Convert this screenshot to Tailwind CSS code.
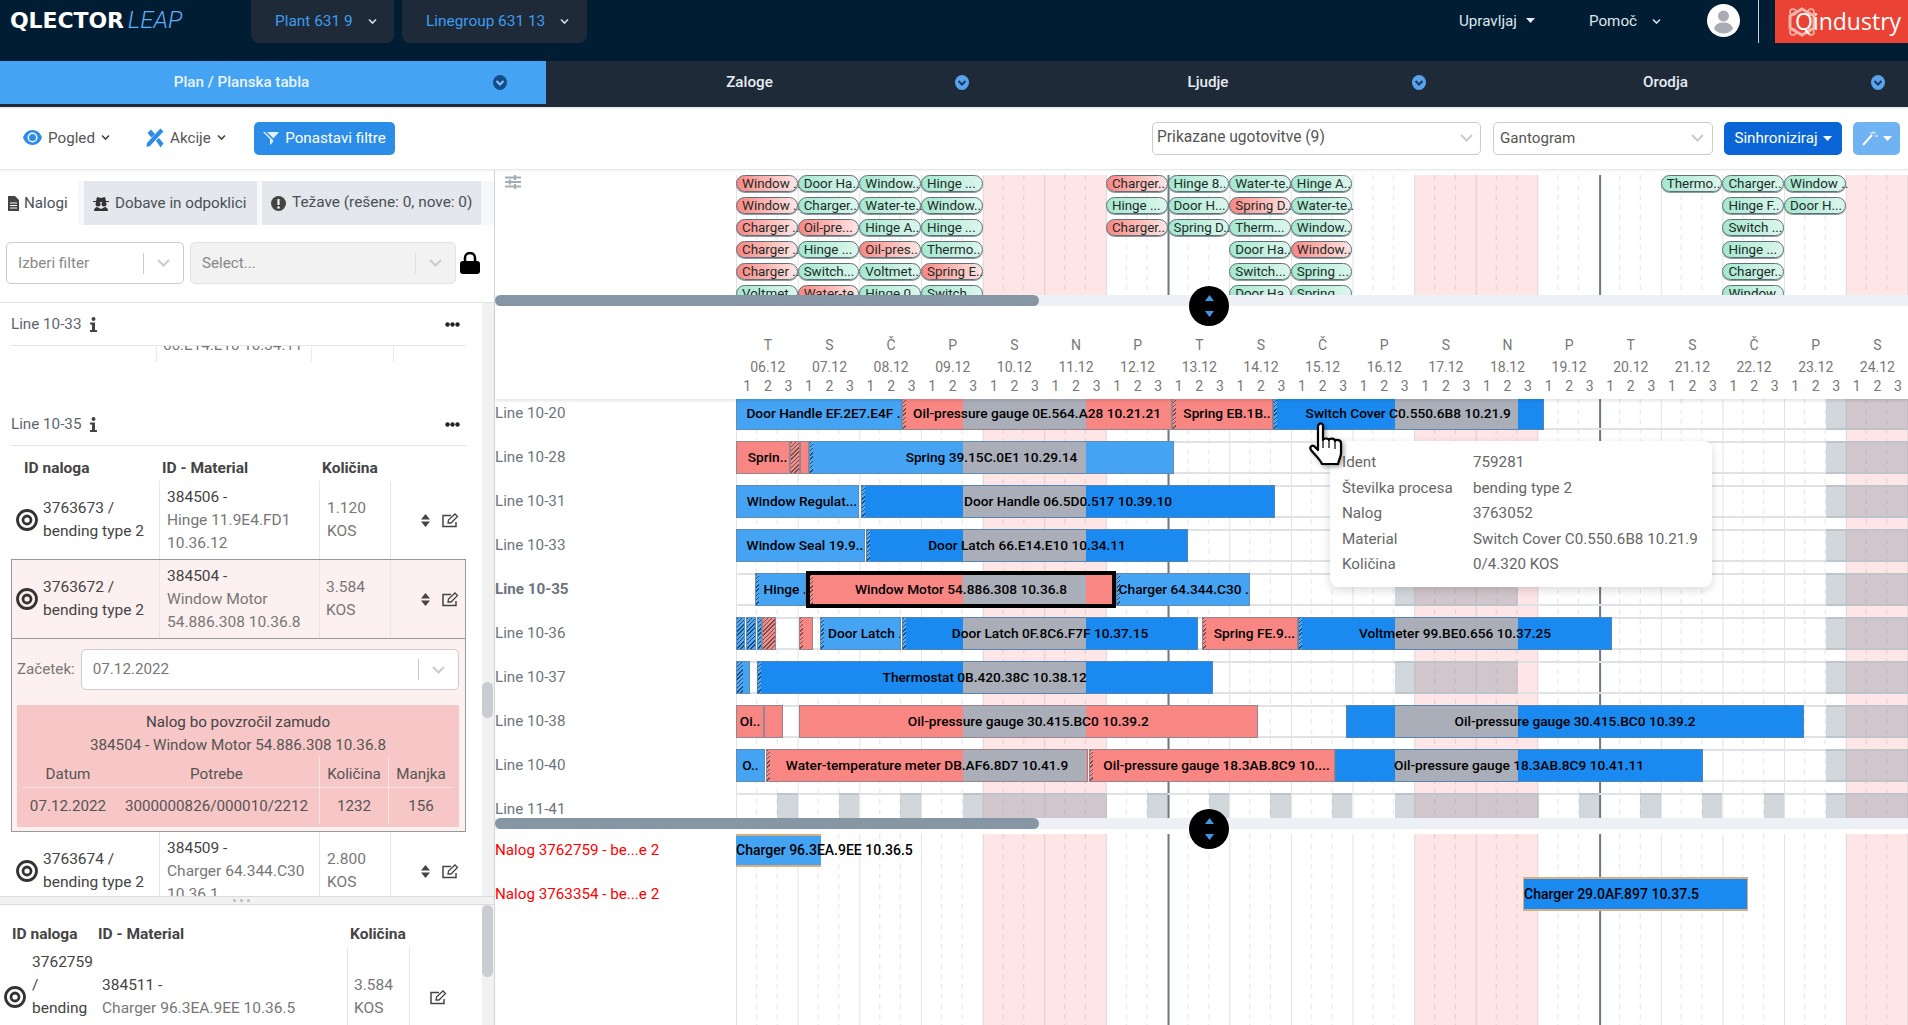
<!DOCTYPE html>
<html lang="sl"><head><meta charset="utf-8"><script src="https://cdn.jsdelivr.net/npm/@tailwindcss/browser@4"></script></head>
<body class="[font-family:Roboto,sans-serif] bg-white">
<div class="w-[1908px] h-[1025px] overflow-hidden flex flex-col text-[15.2px] text-[#495057]">
<!-- header -->
<header class="h-[61px] bg-[#011d33] flex items-start shrink-0">
  <div class="w-[251px] pl-[10px] pt-[6px] flex items-baseline">
    <span class="[font-family:'DejaVu_Sans'] font-bold text-white text-[22px] tracking-[-0.1px] leading-[28px]">QLECTOR</span>
    <span class="italic font-light text-[#5db0f5] text-[24px] ml-[4px] leading-[28px]">LEAP</span>
  </div>
  <div class="w-[143px] h-[43px] bg-[#1e2a38] rounded-b-lg flex items-center pl-[24px] text-[#3d9cf0] text-[15.4px]">Plant 631 9<svg class="ml-[15px]" width="9" height="7" viewBox="0 0 9 7"><path d="M1 1.5l3.5 3.5L8 1.5" fill="none" stroke="#d5dbe2" stroke-width="1.6"/></svg></div>
  <div class="w-[185px] h-[43px] ml-[8px] bg-[#1e2a38] rounded-b-lg flex items-center pl-[24px] text-[#3d9cf0] text-[15.4px]">Linegroup 631 13<svg class="ml-[15px]" width="9" height="7" viewBox="0 0 9 7"><path d="M1 1.5l3.5 3.5L8 1.5" fill="none" stroke="#d5dbe2" stroke-width="1.6"/></svg></div>
  <div class="ml-auto flex items-start h-[43px]">
    <div class="h-[43px] flex items-center text-[#dfe5ea]">Upravljaj<svg class="ml-[9px] mb-[3px]" width="9" height="5" viewBox="0 0 9 5"><path d="M0 0h9L4.500 5z" fill="#e8ecf0"/></svg></div>
    <div class="h-[43px] ml-[54px] flex items-center text-[#dfe5ea]">Pomoč<svg class="ml-[15px]" width="9" height="7" viewBox="0 0 9 7"><path d="M1 1.500l3.500 3.500L8 1.500" fill="none" stroke="#d5dbe2" stroke-width="1.600"/></svg></div>
    <svg class="ml-[46px] mt-[4px]" width="33" height="33" viewBox="0 0 33 33"><circle cx="16.500" cy="16.500" r="16.500" fill="#fff"/><circle cx="16.500" cy="12" r="5.500" fill="#a9adb3"/><path d="M7 25c1-5 5-6.500 9.500-6.500S25 20 26 25c-2.500 3-6 4.500-9.500 4.500S9.500 28 7 25z" fill="#a9adb3"/></svg>
    <div class="w-px h-[43px] ml-[18px] bg-[#c9d0d6]"></div>
    <div class="w-[133px] h-[43px] ml-[16px] bg-[#ea4335] flex items-center pl-[10px] text-white">
      <svg width="34" height="34" viewBox="0 0 34 34"><path d="M17 4l12 7v12l-12 7-12-7V11z" fill="none" stroke="#f6b5ac" stroke-width="3"/><circle cx="8" cy="7" r="3" fill="none" stroke="#f6b5ac" stroke-width="1.600"/><circle cx="8" cy="27" r="3" fill="none" stroke="#f6b5ac" stroke-width="1.600"/><circle cx="26" cy="7" r="3" fill="none" stroke="#f6b5ac" stroke-width="1.600"/><circle cx="26" cy="27" r="3" fill="none" stroke="#f6b5ac" stroke-width="1.600"/></svg>
      <span class="-ml-[24px] text-[23px] leading-none relative [font-family:'Open_Sans']">Qindustry</span>
    </div>
  </div>
</header>
<!-- tabs -->
<nav class="h-[46px] bg-[#1e2a38] flex items-start shrink-0 text-[#e8edf2] font-medium text-[15.2px]">
  <div class="w-[546px] h-[43px] bg-[#45a3f4] flex items-center"><span class="flex-1 text-center pr-[10px] text-[#e9f4fe]">Plan / Planska tabla</span><svg class="mr-[39px]" width="14" height="15" viewBox="0 0 14 15"><ellipse cx="7" cy="7.500" rx="7" ry="7.500" fill="#114d8c"/><path d="M3.500 6l3.500 3.500L10.500 6" fill="none" stroke="#8fc4f5" stroke-width="2"/></svg></div>
  <div class="w-[458px] h-[43px] flex items-center"><span class="flex-1 text-center pr-[2px]">Zaloge</span><svg class="mr-[35px]" width="14" height="15" viewBox="0 0 14 15"><ellipse cx="7" cy="7.500" rx="7" ry="7.500" fill="#5aa3ec"/><path d="M3.500 6l3.500 3.500L10.500 6" fill="none" stroke="#123a63" stroke-width="2"/></svg></div>
  <div class="w-[458px] h-[43px] flex items-center"><span class="flex-1 text-center">Ljudje</span><svg class="mr-[36px]" width="14" height="15" viewBox="0 0 14 15"><ellipse cx="7" cy="7.500" rx="7" ry="7.500" fill="#5aa3ec"/><path d="M3.500 6l3.500 3.500L10.500 6" fill="none" stroke="#123a63" stroke-width="2"/></svg></div>
  <div class="w-[446px] h-[43px] flex items-center"><span class="flex-1 text-center pr-[2px]">Orodja</span><svg class="mr-[23px]" width="14" height="15" viewBox="0 0 14 15"><ellipse cx="7" cy="7.500" rx="7" ry="7.500" fill="#5aa3ec"/><path d="M3.500 6l3.500 3.500L10.500 6" fill="none" stroke="#123a63" stroke-width="2"/></svg></div>
</nav>
<!-- toolbar -->
<div class="h-[63px] shrink-0 flex items-center border-b border-[#e6e8ea] shadow-[inset_0_3px_3px_-2px_rgba(0,0,0,.12),0_1px_2px_rgba(0,0,0,.05)] relative z-10 bg-white text-[#555]">
  <div class="w-[146px] pl-[23px] flex items-center">
  <svg width="19" height="15" viewBox="0 0 19 15"><path d="M9.500 0C5 0 1.500 3 0 7.500 1.500 12 5 15 9.500 15S17.500 12 19 7.500C17.500 3 14 0 9.500 0z" fill="#2b8de8"/><circle cx="9.500" cy="7.500" r="5" fill="#fff"/><circle cx="9.500" cy="7.500" r="3.500" fill="#2b8de8"/></svg>
  <span class="ml-[6px]">Pogled</span><svg class="ml-[6px]" width="9" height="7" viewBox="0 0 9 7"><path d="M1 1.500l3.500 3.500L8 1.500" fill="none" stroke="#444" stroke-width="1.600"/></svg></div>
  <div class="w-[108px] flex items-center">
  <svg width="18" height="20" viewBox="0 0 18 20"><path d="M1 15L12 3l2.500-2.500 3 3L15 6 4 18l-3.500 1z" fill="#2b8de8"/><path d="M1.500 5L5 1.500 9 6 5.500 9.500zM10 12.500L13 10l4.500 5.500-3 4z" fill="#2b8de8"/></svg>
  <span class="ml-[6px]">Akcije</span><svg class="ml-[6px]" width="9" height="7" viewBox="0 0 9 7"><path d="M1 1.500l3.500 3.500L8 1.500" fill="none" stroke="#444" stroke-width="1.600"/></svg></div>
  <button class="w-[141px] h-[33px] bg-[#2b8de8] rounded-[5px] flex items-center justify-center gap-[5px] text-white"><svg width="17" height="15" viewBox="0 0 17 15"><path d="M0 1h16L10 8v3l-3 3V8z" fill="#e3f0fc"/><path d="M2 0l14 14" stroke="#2b8de8" stroke-width="1.500"/></svg>Ponastavi filtre</button>
  <div class="ml-[757px] w-[329px] h-[33px] border border-[#ccc] rounded-[5px] flex items-center justify-between pl-[4px] pr-[7px] text-[15.6px]">Prikazane ugotovitve (9)<svg width="13" height="8" viewBox="0 0 13 8"><path d="M1 1l5.500 5.500L12 1" fill="none" stroke="#ccc" stroke-width="2"/></svg></div>
  <div class="ml-[12px] w-[220px] h-[33px] border border-[#ccc] rounded-[5px] flex items-center justify-between pl-[6px] pr-[8px]">Gantogram<svg width="13" height="8" viewBox="0 0 13 8"><path d="M1 1l5.500 5.500L12 1" fill="none" stroke="#ccc" stroke-width="2"/></svg></div>
  <button class="ml-[11px] w-[118px] h-[33px] bg-[#0a66d6] rounded-[5px] flex items-center justify-center gap-[5px] text-white">Sinhroniziraj<svg width="9" height="5" viewBox="0 0 9 5"><path d="M0 0h9L4.500 5z" fill="#fff"/></svg></button>
  <button class="ml-[11px] w-[47px] h-[33px] bg-[#6fb3f2] rounded-[5px] flex items-center justify-center gap-[4px]"><svg width="17" height="16" viewBox="0 0 17 16"><path d="M1 15L10 5" stroke="#fff" stroke-width="2"/><path d="M11 1v3M14 2l-2 2M16 6h-3M8 2l2 2" stroke="#fff" stroke-width="1"/></svg><svg width="9" height="5" viewBox="0 0 9 5"><path d="M0 0h9L4.500 5z" fill="#fff"/></svg></button>
</div>
<!-- main -->
<div class="flex-1 flex min-h-0">
  <aside class="w-[495px] shrink-0 border-r border-[#d2d5d8] flex flex-col bg-white">
    <div class="mt-[11px] h-[44px] bg-[#f7f8f9] flex shrink-0 text-[#495057]">
      <div class="w-[78px] bg-white flex items-center pl-[8px] gap-[5px]"><svg width="11" height="15" viewBox="0 0 11 15"><path d="M0 0h7l4 4v11H0z" fill="#444"/><path d="M2 7h7M2 9.500h7M2 12h7" stroke="#fff"/></svg>Nalogi</div>
      <div class="ml-[6px] w-[173px] bg-[#e4e7eb] flex items-center pl-[9px] gap-[6px]"><svg width="16" height="15" viewBox="0 0 16 15"><path d="M3 5l1-4 4 1 4-1 1 4h3v1H0V5z" fill="#333"/><circle cx="5" cy="8" r="2.500" fill="#333"/><circle cx="11" cy="8" r="2.500" fill="#333"/><path d="M1 15c0-3 2-4 3-4l4 2 4-2c1 0 3 1 3 4z" fill="#333"/></svg>Dobave in odpoklici</div>
      <div class="ml-[5px] w-[219px] bg-[#e4e7eb] flex items-center pl-[9px] gap-[6px]"><svg width="15" height="15" viewBox="0 0 15 15"><circle cx="7.500" cy="7.500" r="7.500" fill="#444"/><path d="M7.500 3v6" stroke="#fff" stroke-width="2"/><circle cx="7.500" cy="11.500" r="1.200" fill="#fff"/></svg><span class="text-[15.4px]">Težave (rešene: 0, nove: 0)</span></div>
    </div>
    <div class="h-[78px] shrink-0 border-b border-[#e0e2e5] flex pt-[17px] pl-[6px]">
      <div class="w-[178px] h-[42px] border border-[#ccc] rounded-[5px] flex items-center pl-[11px] text-[#888]">Izberi filter<span class="ml-auto w-px h-[21px] bg-[#ccc]"></span><svg class="mx-[13px]" width="13" height="8" viewBox="0 0 13 8"><path d="M1 1l5.500 5.500L12 1" fill="none" stroke="#ccc" stroke-width="2"/></svg></div>
      <div class="ml-[6px] w-[266px] h-[42px] border border-[#e2e2e2] bg-[#f2f2f2] rounded-[5px] flex items-center pl-[11px] text-[#888]">Select...<span class="ml-auto w-px h-[21px] bg-[#e0e0e0]"></span><svg class="mx-[13px]" width="13" height="8" viewBox="0 0 13 8"><path d="M1 1l5.500 5.500L12 1" fill="none" stroke="#ccc" stroke-width="2"/></svg></div>
      <svg class="ml-[4px] mt-[10px]" width="20" height="22" viewBox="0 0 20 22"><path d="M5 10V6a5 5 0 0 1 10 0v4" fill="none" stroke="#000" stroke-width="2.500"/><rect y="9" width="20" height="13" rx="3" fill="#000"/></svg>
    </div>
    <div class="h-[593px] shrink-0 flex relative overflow-hidden">
      <div class="w-[482px] shrink-0 pl-[11px] overflow-hidden">
        <div class="w-[455px]">
          <div class="h-[43px] border-b border-[#e4e6e8] flex items-center text-[#5c6670]">Line 10-33<svg class="ml-[9px]" width="7" height="15" viewBox="0 0 7 15"><circle cx="3.500" cy="2" r="2" fill="#444"/><path d="M0 5.500h5V13h2v2H0v-2h2V7.500H0z" fill="#444"/></svg><svg class="ml-auto mr-[6px]" width="15" height="5" viewBox="0 0 15 5"><circle cx="2.500" cy="2.500" r="2.200" fill="#222"/><circle cx="7.500" cy="2.500" r="2.200" fill="#222"/><circle cx="12.500" cy="2.500" r="2.200" fill="#222"/></svg></div>
          <div class="h-[16px] overflow-hidden grid grid-cols-[146px_155px_82px_72px]"><div class="border-r border-[#e8eaec]"></div><div class="border-r border-[#e8eaec] pl-[6px] -mt-[12px] leading-[23px] text-[#777]">66.E14.E10 10.34.11</div><div class="border-r border-[#e8eaec]"></div><div></div></div>
          <div class="h-[41px]"></div>
          <div class="h-[43px] border-b border-[#e4e6e8] flex items-center text-[#5c6670]">Line 10-35<svg class="ml-[9px]" width="7" height="15" viewBox="0 0 7 15"><circle cx="3.500" cy="2" r="2" fill="#444"/><path d="M0 5.500h5V13h2v2H0v-2h2V7.500H0z" fill="#444"/></svg><svg class="ml-auto mr-[6px]" width="15" height="5" viewBox="0 0 15 5"><circle cx="2.500" cy="2.500" r="2.200" fill="#222"/><circle cx="7.500" cy="2.500" r="2.200" fill="#222"/><circle cx="12.500" cy="2.500" r="2.200" fill="#222"/></svg></div>
          <div class="h-[35px] grid grid-cols-[149px_160px_71px_75px] font-bold text-[#444] text-[15.5px] items-end pb-[1px]"><span class="pl-[13px]">ID naloga</span><span class="pl-[2px]">ID - Material</span><span class="pl-[2px]">Količina</span></div>
          <div class="h-[78px] grid grid-cols-[149px_160px_71px_75px] leading-[23px] text-[15.5px]">
            <div class="border-r border-[#e4e6e8] flex items-center pl-[5px] gap-[5px]"><svg width="22" height="22" viewBox="0 0 22 22"><circle cx="11" cy="11" r="9.500" fill="none" stroke="#333" stroke-width="2.800"/><circle cx="11" cy="11" r="4" fill="none" stroke="#333" stroke-width="2.800"/></svg><div class="text-[#444]">3763673 /<br>bending type 2</div></div>
            <div class="border-r border-[#e4e6e8] flex flex-col justify-center pl-[7px] text-[#777]"><span class="text-[#444]">384506 -</span><span>Hinge 11.9E4.FD1</span><span>10.36.12</span></div>
            <div class="border-r border-[#e4e6e8] flex items-center pl-[7px] text-[#777]"><span>1.120<br>KOS</span></div>
            <div class="flex items-center justify-end pr-[7px] gap-[12px]"><svg width="9" height="13" viewBox="0 0 9 13"><path d="M4.500 0L9 5.500H0zM4.500 13L0 7.500h9z" fill="#444"/></svg><svg width="17" height="15" viewBox="0 0 17 15"><path d="M14 9v4.500H1V2.500h8" fill="none" stroke="#444" stroke-width="1.500"/><path d="M6 10l.5-3L13 1l2.500 2.500L9 10z" fill="none" stroke="#444" stroke-width="1.300"/></svg></div>
          </div>
          <div class="border border-[#999] bg-[#fdf0f0]">
            <div class="h-[79px] grid grid-cols-[148px_160px_71px_74px] leading-[23px] border-b border-[#999] text-[15.5px]">
              <div class="border-r border-[#e4e6e8] flex items-center pl-[4px] gap-[5px]"><svg width="22" height="22" viewBox="0 0 22 22"><circle cx="11" cy="11" r="9.500" fill="none" stroke="#333" stroke-width="2.800"/><circle cx="11" cy="11" r="4" fill="none" stroke="#333" stroke-width="2.800"/></svg><div class="text-[#444]">3763672 /<br>bending type 2</div></div>
              <div class="border-r border-[#e4e6e8] flex flex-col justify-center pl-[7px] text-[#777]"><span class="text-[#444]">384504 -</span><span>Window Motor</span><span>54.886.308 10.36.8</span></div>
              <div class="border-r border-[#e4e6e8] flex items-center pl-[6px] text-[#777]"><span>3.584<br>KOS</span></div>
              <div class="flex items-center justify-end pr-[6px] gap-[12px]"><svg width="9" height="13" viewBox="0 0 9 13"><path d="M4.500 0L9 5.500H0zM4.500 13L0 7.500h9z" fill="#444"/></svg><svg width="17" height="15" viewBox="0 0 17 15"><path d="M14 9v4.500H1V2.500h8" fill="none" stroke="#444" stroke-width="1.500"/><path d="M6 10l.5-3L13 1l2.500 2.500L9 10z" fill="none" stroke="#444" stroke-width="1.300"/></svg></div>
            </div>
            <div class="pl-[5px] pr-[6px] pt-[10px] pb-[4px]">
              <div class="flex items-center h-[41px] text-[#777]">Začetek:<div class="ml-[6px] flex-1 h-[41px] bg-white border border-[#ccc] rounded-[5px] flex items-center pl-[11px]">07.12.2022<span class="ml-auto w-px h-[21px] bg-[#ccc]"></span><svg class="mx-[13px]" width="13" height="8" viewBox="0 0 13 8"><path d="M1 1l5.500 5.500L12 1" fill="none" stroke="#ccc" stroke-width="2"/></svg></div></div>
              <div class="mt-[15px] h-[122px] bg-[#f7c6c6] text-center leading-[23px] px-[6px] pt-[6px] text-[#555]">
                <div class="text-[#444]">Nalog bo povzročil zamudo</div><div>384504 - Window Motor 54.886.308 10.36.8</div>
                <div class="grid grid-cols-[297px_69px_64px] border-b border-[#f9e5e5] h-[32px] -mt-[1px]"><span class="leading-[36px] border-r border-[#f9e5e5] grid grid-cols-[90px_207px]"><span>Datum</span><span>Potrebe</span></span><span class="leading-[36px] border-r border-[#f9e5e5]">Količina</span><span class="leading-[36px]">Manjka</span></div>
                <div class="grid grid-cols-[297px_69px_64px] h-[32px] leading-[36px]"><span class="border-r border-[#f9e5e5] grid grid-cols-[90px_207px]"><span>07.12.2022</span><span>3000000826/000010/2212</span></span><span class="border-r border-[#f9e5e5]">1232</span><span>156</span></div>
              </div>
            </div>
          </div>
          <div class="h-[78px] grid grid-cols-[149px_160px_71px_75px] leading-[23px] text-[15.5px]">
            <div class="border-r border-[#e4e6e8] flex items-center pl-[5px] gap-[5px]"><svg width="22" height="22" viewBox="0 0 22 22"><circle cx="11" cy="11" r="9.500" fill="none" stroke="#333" stroke-width="2.800"/><circle cx="11" cy="11" r="4" fill="none" stroke="#333" stroke-width="2.800"/></svg><div class="text-[#444]">3763674 /<br>bending type 2</div></div>
            <div class="border-r border-[#e4e6e8] flex flex-col justify-center pl-[7px] text-[#777]"><span class="text-[#444]">384509 -</span><span>Charger 64.344.C30</span><span>10.36.1</span></div>
            <div class="border-r border-[#e4e6e8] flex items-center pl-[7px] text-[#777]"><span>2.800<br>KOS</span></div>
            <div class="flex items-center justify-end pr-[7px] gap-[12px]"><svg width="9" height="13" viewBox="0 0 9 13"><path d="M4.500 0L9 5.500H0zM4.500 13L0 7.500h9z" fill="#444"/></svg><svg width="17" height="15" viewBox="0 0 17 15"><path d="M14 9v4.500H1V2.500h8" fill="none" stroke="#444" stroke-width="1.500"/><path d="M6 10l.5-3L13 1l2.500 2.500L9 10z" fill="none" stroke="#444" stroke-width="1.300"/></svg></div>
          </div>
        </div>
      </div>
      <div class="w-[12px] bg-[#f1f1f1] relative"><div class="absolute left-0 right-px top-[379px] h-[36px] rounded-full bg-[#c9cdd2]"></div></div>
    </div>
    <div class="h-[9px] shrink-0 bg-[#f1f1f1] border-y border-[#dcdcdc] flex items-center justify-center gap-[4px] pr-[12px]"><i class="w-[3px] h-[3px] rounded-full bg-[#bbb]"></i><i class="w-[3px] h-[3px] rounded-full bg-[#bbb]"></i><i class="w-[3px] h-[3px] rounded-full bg-[#bbb]"></i></div>
    <div class="flex-1 flex min-h-0">
      <div class="w-[482px] shrink-0 overflow-hidden text-[15.5px]">
        <div class="h-[42px] grid grid-cols-[98px_252px_auto] font-bold text-[#444] items-end pb-[1px]"><span class="pl-[12px]">ID naloga</span><span>ID - Material</span><span>Količina</span></div>
        <div class="grid grid-cols-[98px_250px_62px_72px] h-[90px] leading-[23px]">
          <div class="flex items-start pl-[4px] gap-[6px]"><svg class="mt-[39px] shrink-0" width="22" height="22" viewBox="0 0 22 22"><circle cx="11" cy="11" r="9.500" fill="none" stroke="#333" stroke-width="2.800"/><circle cx="11" cy="11" r="4" fill="none" stroke="#333" stroke-width="2.800"/></svg><div class="text-[#444] pt-[4px]">3762759<br>/<br>bending</div></div>
          <div class="border-r border-[#e4e6e8] pl-[4px] pt-[27px] text-[#777]"><span class="text-[#444]">384511 -</span><br>Charger 96.3EA.9EE 10.36.5</div>
          <div class="border-r border-[#e4e6e8] pl-[6px] pt-[27px] text-[#777]">3.584<br>KOS</div>
          <div class="flex justify-start pl-[20px] pt-[43px]"><svg width="17" height="15" viewBox="0 0 17 15"><path d="M14 9v4.500H1V2.500h8" fill="none" stroke="#444" stroke-width="1.500"/><path d="M6 10l.5-3L13 1l2.500 2.500L9 10z" fill="none" stroke="#444" stroke-width="1.300"/></svg></div>
        </div>
      </div>
      <div class="w-[12px] bg-[#f1f1f1] relative"><div class="absolute left-0 right-px top-0 h-[72px] rounded-full bg-[#c9cdd2]"></div></div>
    </div>
  </aside>
  <section id="right" class="flex-1 min-w-0 flex flex-col relative text-[14px]">
    <div id="ptop" class="h-[136px] shrink-0 relative overflow-hidden"></div>
    <div id="phead" class="h-[93px] shrink-0 relative z-10 shadow-[0_2px_3px_rgba(0,0,0,.1)] pl-[242px] text-[14px] text-[#777] bg-white"></div>
    <div id="pgantt" class="h-[430px] shrink-0 relative overflow-hidden"></div>
    <div id="pbottom" class="flex-1 relative overflow-hidden"></div>
    <div id="poverlays"></div>
  </section>
</div>
</div>
<script>
const $=i=>document.getElementById(i);
const D=61.65,S=D/3,X0=736;
const bgs={l:'bg-[#45a3f4]',d:'bg-[#1a8af0]',r:'bg-[#f88683]',b:'bg-[#45a3f4]'};
const hat={b:'bg-[repeating-linear-gradient(135deg,#134e86_0,#134e86_1px,#5aa8ec_1px,#5aa8ec_3px)]',r:'bg-[repeating-linear-gradient(135deg,#7a4a4a_0,#7a4a4a_1px,#ee8f8c_1px,#ee8f8c_3px)]'};
const grays=[[963,1086],[1395,1518],[1826,1908]];
function grid(h,id){
  let s=`<svg class="absolute left-[241px] top-0" width="1172" height="${h}"><defs><pattern id="${id}" width="${D}" height="10" patternUnits="userSpaceOnUse"><path d="M${S} 0v5M${2*S} 0v5" stroke="#64707c" stroke-opacity=".2" stroke-width="1"/><path d="M.5 0v10" stroke="#64707c" stroke-opacity=".2" stroke-width="1"/></pattern></defs>`;
  [[4,2],[11,2],[18,1]].forEach(([i,n])=>{s+=`<rect x="${i*D+.5}" y="0" width="${n*D}" height="${h}" fill="#fee5e6"/>`});
  s+=`<rect width="1172" height="${h}" fill="url(#${id})"/>`;
  [7,14].forEach(i=>{s+=`<rect x="${i*D}" y="0" width="2" height="${h}" fill="#6c7a89"/>`});
  return s+'</svg>';
}
function track(){return '<div class="absolute left-0 right-0 bottom-0 h-[11px] bg-[#edf0f4]"><div class="h-full w-[544px] rounded-full bg-[#8796a5]"></div></div>'}
const chips=[
 [0,[['Window ..',1],['Window ..',1],['Charger ..',1],['Charger ..',1],['Charger ..',1],['Voltmet',0]]],
 [1,[['Door Ha..',0],['Charger..',0],['Oil-pre...',1],['Hinge ...',0],['Switch...',0],['Water-te',1]]],
 [2,[['Window..',0],['Water-te..',0],['Hinge A..',0],['Oil-pres..',1],['Voltmet..',0],['Hinge 0',0]]],
 [3,[['Hinge ...',0],['Window..',0],['Hinge ...',0],['Thermo..',0],['Spring E..',1],['Switch',0]]],
 [6,[['Charger..',1],['Hinge ...',0],['Charger..',1]]],
 [7,[['Hinge 8..',0],['Door H...',0],['Spring D..',0]]],
 [8,[['Water-te..',0],['Spring D..',1],['Therm...',0],['Door Ha..',0],['Switch...',0],['Door Ha',0]]],
 [9,[['Hinge A..',0],['Water-te..',0],['Window..',0],['Window..',1],['Spring ...',0],['Spring',0]]],
 [15,[['Thermo..',0]]],
 [16,[['Charger..',0],['Hinge F..',0],['Switch ...',0],['Hinge ...',0],['Charger..',0],['Window',0]]],
 [17,[['Window ..',0],['Door H...',0]]]
];
let t=`<div class="absolute left-0 right-0 top-[5px] bottom-[11px] overflow-hidden">${grid(120,'g1')}`;
chips.forEach(([i,c])=>{
  t+=`<div class="absolute top-0 flex flex-col gap-[5px] w-[61.65px]" style="left:${241+i*D}px">`;
  c.forEach(([x,r])=>{t+=`<div class="h-[17px] shrink-0 rounded-[9px] border border-[#5f7078] shadow-[0_1px_0_#8b9aa0] whitespace-nowrap pl-[5px] leading-[15.5px] text-[13.4px] text-[#1d2b2a] ${r?'bg-gradient-to-r from-[#f88683] to-[#fbe6e4]':'bg-gradient-to-r from-[#a5e8cf] to-[#dcf6ec]'}">${x}</div>`});
  t+='</div>';
});
t+=`</div>${track()}<svg class="absolute left-[10px] top-[5px]" width="16" height="14" viewBox="0 0 16 14"><path d="M0 2.500h16M0 7h16M0 11.500h16" stroke="#a3adb8" stroke-width="1.800"/><path d="M10 0v5M5 4.500v5M10 9v5" stroke="#a3adb8" stroke-width="2"/></svg>`;
$('ptop').innerHTML=t;
const L='T S Č P S N P T S Č P S N P T S Č P S'.split(' ');
let h='<div class="grid grid-cols-[repeat(19,61.65px)] text-center pt-[29px] leading-[20px]">';
L.forEach((l,i)=>{const d=String(6+i).padStart(2,'0');h+=`<div><div class="h-[22px]">${l}</div><div class="h-[20px]">${d}.12</div><div class="grid grid-cols-3 -mt-[1px]">`+'<span>1</span><span>2</span><span>3</span></div></div>'});
$('phead').innerHTML=h+'</div>';
function bar(b){
  const [a,e,c,lab,ha,o]=b; const w=e-a;
  let s=`<div class="absolute top-0 h-[33px] overflow-hidden border border-[#6f8296]/70 ${bgs[c]}" style="left:${a-X0}px;width:${w}px">`;
  grays.forEach(([g1,g2])=>{const p=Math.max(a,g1),q=Math.min(e,g2);if(q>p)s+=`<div class="absolute top-0 bottom-0 bg-[#a9aeb9]" style="left:${p-a-1}px;width:${q-p}px"></div>`});
  if(ha)s+=`<div class="absolute left-0 top-0 bottom-0 ${hat[ha]}" style="width:${(o&&o.hw)||3}px"></div>`;
  const pad=lab&&/\.$/.test(lab)&&w<300&&!/^(Oi|O)\.\./.test(lab)?'pl-[9px]':'';
  if(lab)s+=`<div class="absolute inset-0 flex items-center justify-center whitespace-nowrap font-medium text-black text-[13.7px] ${pad}">${lab}</div>`;
  return s+'</div>';
}
const rows=[
 ['Line 10-20',[[736,902,'l','Door Handle EF.2E7.E4F .'],[902,1172,'r','Oil-pressure gauge 0E.564.A28 10.21.21','r'],[1172,1273,'r','Spring EB.1B..','r'],[1273,1543.5,'d','Switch Cover C0.550.6B8 10.21.9','b']]],
 ['Line 10-28',[[736,790,'r','Sprin..'],[790,800,'r','', 'r',{hw:10}],[800,809,'r',''],[809,1174,'l','Spring 39.15C.0E1 10.29.14','b']]],
 ['Line 10-31',[[736,859,'l','Window Regulat...'],[861,1275,'d','Door Handle 06.5D0.517 10.39.10','b']]],
 ['Line 10-33',[[736,865,'l','Window Seal 19.9..'],[866,1188,'d','Door Latch 66.E14.E10 10.34.11','b']]],
 ['Line 10-35',[[755,806,'l','Hinge .','b'],[1116,1250,'l','Charger 64.344.C30 ...','b']]],
 ['Line 10-36',[[736,745,'b','', 'b',{hw:9}],[746,756,'b','', 'b',{hw:10}],[757,762,'b','', 'b',{hw:5}],[762,776,'r','', 'r',{hw:14}],[799,813,'r','','r'],[820,901,'l','Door Latch .','b'],[902,1198,'d','Door Latch 0F.8C6.F7F 10.37.15','b'],[1202,1298,'r','Spring FE.9...','r'],[1298,1612,'d','Voltmeter 99.BE0.656 10.37.25','b']]],
 ['Line 10-37',[[736,750,'b','', 'b',{hw:6}],[757,1212.5,'d','Thermostat 0B.420.38C 10.38.12','b']]],
 ['Line 10-38',[[736,764,'r','Oi..'],[764,783,'r',''],[799,1257.5,'r','Oil-pressure gauge 30.415.BC0 10.39.2'],[1346,1804,'d','Oil-pressure gauge 30.415.BC0 10.39.2']]],
 ['Line 10-40',[[736,765,'l','O..'],[766,1088,'r','Water-temperature meter DB.AF6.8D7 10.41.9','r'],[1089,1335,'r','Oil-pressure gauge 18.3AB.8C9 10....','r'],[1335,1703,'d','Oil-pressure gauge 18.3AB.8C9 10.41.11']]],
 ['Line 11-41',[]]
];
let g=grid(419,'g2')+'<div class="relative flex flex-col gap-[11px] -mt-[2px]">';
rows.forEach(([n,bs],ri)=>{
  const bold=n==='Line 10-35';
  g+=`<div class="h-[33px] shrink-0 flex items-center"><div class="w-[241px] shrink-0 text-[15.2px] text-[#6c757d] ${bold?'font-bold':''}">${n}</div><div class="relative flex-1 h-[33px]">`;
  g+='<div class="absolute left-0 right-0 top-0 h-[2px] bg-[#dfe2e6]"></div><div class="absolute left-0 right-0 bottom-0 h-[2px] bg-[#dfe2e6]"></div>';
  const rg=ri==9?[[963,1107],[1395,1539],[1826,1908]]:grays;
  rg.forEach(([a,e])=>{g+=`<div class="absolute top-0 bottom-0 bg-[#82919b]/[.36]" style="left:${a-X0}px;width:${e-a}px"></div>`});
  if(ri==9){[0,1,2,6,7,8,9,13,14,15,16].forEach(i=>{g+=`<div class="absolute top-0 bottom-0 bg-[#82919b]/[.36]" style="left:${i*D+2*S}px;width:${S}px"></div>`})}
  bs.forEach(b=>g+=bar(b));
  if(bold)g+=`<div class="absolute -top-[2px] h-[37px] border-4 border-black bg-[#f88683] overflow-hidden" style="left:${806-X0}px;width:310px"><div class="absolute top-0 bottom-0 bg-[#a9aeb9]" style="left:${963-810}px;width:123px"></div><div class="absolute left-0 top-0 bottom-0 w-[3px] ${hat.r}"></div><div class="absolute inset-0 flex items-center justify-center whitespace-nowrap font-medium text-black text-[13.7px]">Window Motor 54.886.308 10.36.8</div></div>`;
  g+='</div></div>';
});
g+='</div>'+track();
$('pgantt').innerHTML=g;
let bt=`<div class="absolute left-0 right-0 top-[5px] bottom-0">${grid(191,'g3')}</div><div class="relative pt-[5px] flex flex-col gap-[10px]">
<div class="h-[33px] flex items-center"><div class="w-[241px] shrink-0 text-[15.2px] text-[#f00]">Nalog 3762759 - be...e 2</div><div class="relative flex-1 h-[33px]"><div class="absolute left-0 top-0 w-[85px] h-[33px] bg-[#45a3f4] border-y-2 border-[#dcae7e]"></div><div class="absolute left-0 top-0 h-[33px] flex items-center whitespace-nowrap font-medium text-[14px] text-black">Charger 96.3EA.9EE 10.36.5</div></div></div>
<div class="h-[34px] flex items-center"><div class="w-[241px] shrink-0 text-[15.2px] text-[#f00]">Nalog 3763354 - be...e 2</div><div class="relative flex-1 h-[34px]"><div class="absolute left-[787px] top-0 w-[225px] h-[34px] bg-[#1a8af0] border-y-2 border-x border-[#dcae7e] flex items-center whitespace-nowrap font-medium text-[14px] text-black">Charger 29.0AF.897 10.37.5</div></div></div></div>`;
$('pbottom').innerHTML=bt;
const tri='<svg width="9" height="22" viewBox="0 0 9 22"><path d="M4.500 0L9 6H0zM4.500 22L0 16h9z" fill="#3f97ea"/></svg>';
const row=(a,b)=>`<div class="h-[25.5px] flex items-center"><span class="w-[131px]">${a}</span><span>${b}</span></div>`;
$('poverlays').innerHTML=`
<div class="absolute left-[694px] top-[116px] w-10 h-10 rounded-full bg-black flex items-center justify-center z-20">${tri}</div>
<div class="absolute left-[694px] top-[639px] w-10 h-10 rounded-full bg-black flex items-center justify-center z-20">${tri}</div>
<div class="absolute left-[835px] top-[271px] w-[382px] h-[146px] bg-white rounded-[8px] shadow-[0_3px_10px_rgba(0,0,0,.15)] z-20 pl-[12px] pt-[9px] text-[15.2px] text-[#666]">${row('Ident','759281')}${row('Številka procesa','bending type 2')}${row('Nalog','3763052')}${row('Material','Switch Cover C0.550.6B8 10.21.9')}${row('Količina','0/4.320 KOS')}</div>
<svg class="absolute left-[814px] top-[252px] z-30 drop-shadow-[2px_2px_2px_rgba(0,0,0,.35)]" width="36" height="44" viewBox="0 0 36 44"><path d="M10 2c2-1.500 4 0 4 2v14c0-2 6-2 6 0 0-2 6-2 6 1 1-2 6-1 6 2v10c0 4-2 6-3 11H13c-2-5-7-9-11-14-2-3 1-5 3-4l4 4V5c0-1 0-2 1-3z" fill="#fff" stroke="#000" stroke-width="2.200" stroke-linejoin="round"/><path d="M14 18v8M20 18v8M26 19v8" stroke="#000" stroke-width="1.200"/></svg>`;
</script>
</body></html>
